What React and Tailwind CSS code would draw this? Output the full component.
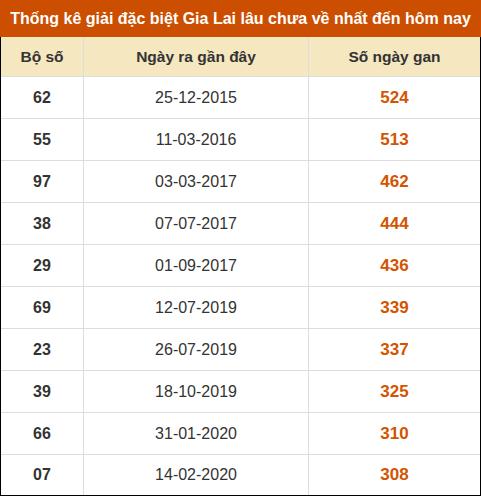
const rows = [
  ["62", "25-12-2015", "524"],
  ["55", "11-03-2016", "513"],
  ["97", "03-03-2017", "462"],
  ["38", "07-07-2017", "444"],
  ["29", "01-09-2017", "436"],
  ["69", "12-07-2019", "339"],
  ["23", "26-07-2019", "337"],
  ["39", "18-10-2019", "325"],
  ["66", "31-01-2020", "310"],
  ["07", "14-02-2020", "308"],
];

export default function App() {
  return (
    <div className="w-[481px] h-[496px] bg-white overflow-hidden" style={{ fontFamily: '"Liberation Sans", Arial, sans-serif' }}>
      <div className="h-[37px] bg-[#cc4e00] text-white font-bold text-[16px] flex items-center justify-center whitespace-nowrap">
        Thống kê giải đặc biệt Gia Lai lâu chưa về nhất đến hôm nay
      </div>
      <div className="border-x border-b border-black">
        <div className="grid grid-cols-[83px_225px_1fr] h-[39px] bg-[#f5e7c0] text-[#333] font-bold text-[15.5px]">
          <div className="flex items-center justify-center border-r border-[#ddd]">Bộ số</div>
          <div className="flex items-center justify-center border-r border-[#ddd]">Ngày ra gần đây</div>
          <div className="flex items-center justify-center">Số ngày gan</div>
        </div>
        {rows.map((r, i) => (
          <div key={i} className={(i === rows.length - 1 ? "h-[41px]" : "h-[42px]") + " grid grid-cols-[83px_225px_1fr] border-t border-[#ddd] text-[16px]"}>
            <div className="flex items-center justify-center border-r border-[#ddd] font-bold text-[#333]">{r[0]}</div>
            <div className="flex items-center justify-center border-r border-[#ddd] text-[#333]">{r[1]}</div>
            <div className="flex items-center justify-center font-bold text-[#d35400] text-[17px]">{r[2]}</div>
          </div>
        ))}
      </div>
    </div>
  );
}
